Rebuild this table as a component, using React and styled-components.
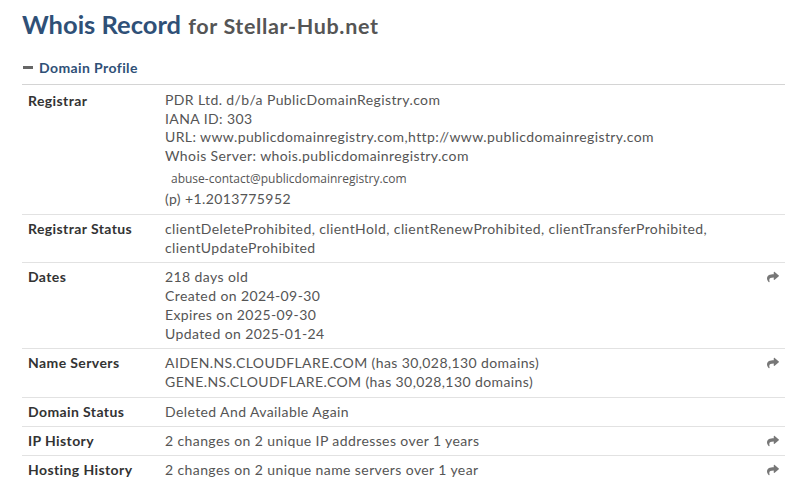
import React from 'react';
import styled, { createGlobalStyle } from 'styled-components';
import { FaShare } from 'react-icons/fa';

const GlobalStyle = createGlobalStyle`
  body {
    margin: 0;
    background: #fff;
    font-family: Lato, "Liberation Sans", sans-serif;
  }
`;

const Page = styled.div`
  padding: 8px 15px 0 22px;
`;

const Title = styled.h1`
  margin: 0;
  font-size: 25.5px;
  font-weight: 700;
  color: #2f5077;
  line-height: 32px;
`;

const TitleFor = styled.span`
  font-size: 21.5px;
  color: #555;
  margin-left: 1px;
  letter-spacing: 0.65px;
`;

const SectionHead = styled.div`
  display: flex;
  align-items: center;
  gap: 6px;
  margin-top: 17px;
  padding-bottom: 8px;
  font-size: 14px;
  line-height: 17px;
  letter-spacing: 0.4px;
  font-weight: 700;
  color: #2f5077;
  border-bottom: 1px solid #d4d4d4;
`;

const Minus = styled.span`
  width: 10px;
  height: 3px;
  background: #666;
  margin-left: 1px;
`;

const Row = styled.div`
  display: grid;
  grid-template-columns: 143px 1fr 24px;
  padding: ${p => p.$pad || '4px 0 5px'};
  border-top: ${p => (p.$first ? 'none' : '1px solid #e2e2e2')};
  font-size: 14px;
  letter-spacing: 0.4px;
  line-height: 19px;
`;

const Label = styled.div`
  padding-left: 6px;
  font-weight: 700;
  color: #333;
`;

const Value = styled.div`
  color: #555;
`;

const Line = styled.div`
  line-height: ${p => p.$lh || '19px'};
`;

const Contact = styled.div`
  font-family: "Open Sans", "Liberation Sans", sans-serif;
  font-size: 12px;
  letter-spacing: 0;
  color: #555;
  padding-left: 6px;
  margin-top: 5px;
  line-height: 18px;
`;

const Phone = styled.div`
  margin-top: 1px;
  line-height: 19px;
`;

const Action = styled.div`
  display: flex;
  justify-content: flex-end;
  padding-top: 4px;
  padding-right: 6px;
  color: #777;
  font-size: 12px;
`;

const rows = [
  {
    label: 'Registrar Status',
    lines: [
      'clientDeleteProhibited, clientHold, clientRenewProhibited, clientTransferProhibited,',
      'clientUpdateProhibited',
    ],
  },
  {
    label: 'Dates',
    lines: ['218 days old', 'Created on 2024-09-30', 'Expires on 2025-09-30', 'Updated on 2025-01-24'],
    link: true,
  },
  {
    label: 'Name Servers',
    lines: ['AIDEN.NS.CLOUDFLARE.COM (has 30,028,130 domains)', 'GENE.NS.CLOUDFLARE.COM (has 30,028,130 domains)'],
    link: true,
    pad: '4px 0 6px',
  },
  { label: 'Domain Status', lines: ['Deleted And Available Again'] },
  { label: 'IP History', lines: ['2 changes on 2 unique IP addresses over 1 years'], link: true },
  { label: 'Hosting History', lines: ['2 changes on 2 unique name servers over 1 year'], link: true },
];

export default function App() {
  return (
    <Page>
      <GlobalStyle />
      <Title>
        Whois Record <TitleFor>for Stellar-Hub.net</TitleFor>
      </Title>
      <SectionHead>
        <Minus />
        Domain Profile
      </SectionHead>

      <Row $first $pad="6px 0 6px">
        <Label>Registrar</Label>
        <Value>
          <Line $lh="18.5px">PDR Ltd. d/b/a PublicDomainRegistry.com</Line>
          <Line $lh="18.5px">IANA ID: 303</Line>
          <Line $lh="18.5px">URL: www.publicdomainregistry.com,http://www.publicdomainregistry.com</Line>
          <Line $lh="18.5px">Whois Server: whois.publicdomainregistry.com</Line>
          <Contact>abuse-contact@publicdomainregistry.com</Contact>
          <Phone>(p) +1.2013775952</Phone>
        </Value>
        <div />
      </Row>

      {rows.map(r => (
        <Row key={r.label} $pad={r.pad}>
          <Label>{r.label}</Label>
          <Value>
            {r.lines.map(l => (
              <Line key={l}>{l}</Line>
            ))}
          </Value>
          <Action>{r.link && <FaShare />}</Action>
        </Row>
      ))}
    </Page>
  );
}
